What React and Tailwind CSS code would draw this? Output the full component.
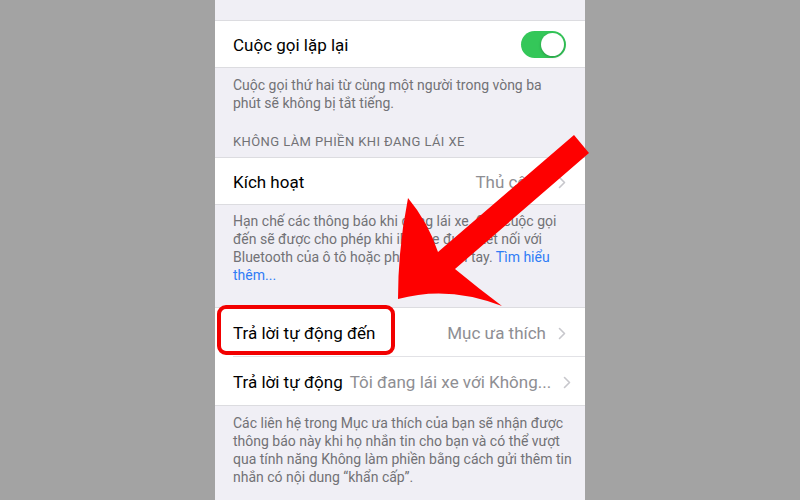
import React from 'react';

const font = { fontFamily: 'Roboto, "Noto Sans", sans-serif' };

const Chevron = () => (
  <svg width="8" height="13" viewBox="0 0 8 13" className="ml-[12px] shrink-0">
    <path d="M1.5 1.5 L6.5 6.5 L1.5 11.5" fill="none" stroke="#c7c7cc" strokeWidth="1.6" strokeLinecap="round" strokeLinejoin="round" />
  </svg>
);

const Toggle = () => (
  <div className="w-[45px] h-[27px] rounded-full bg-[#34c759] p-[2px] flex justify-end">
    <div className="w-[23px] h-[23px] rounded-full bg-white shadow-[0_1px_3px_rgba(0,0,0,0.25)]" />
  </div>
);

const Row = ({ label, value, toggle, className = '' }) => (
  <div className={`h-[48px] bg-white flex items-center pl-[18px] pr-[19px] pt-[3px] ${className}`}>
    <span className="text-[17px] text-black whitespace-nowrap">{label}</span>
    <div className="flex-1 min-w-[7px]" />
    {toggle ? (
      <div className="-mt-[3px]">
        <Toggle />
      </div>
    ) : (
      <>
        <span className="text-[17px] text-[#8e8e93] whitespace-nowrap">{value}</span>
        <Chevron />
      </>
    )}
  </div>
);

const Footer = ({ lines, className = '' }) => (
  <div className={`pl-[18px] text-[14px] leading-[18px] text-[#727276] ${className}`}>
    {lines.map((l, i) => (
      <div key={i} className="whitespace-nowrap">{l}</div>
    ))}
  </div>
);

const Arrow = () => (
  <svg className="absolute inset-0 pointer-events-none" width="800" height="500" viewBox="0 0 800 500">
    <path
      d="M574 135 L589 153 L455 269 Q478 288 502 306 Q448 285 398 299 Q398 248 408 198 Q428 222 438 252 Z"
      fill="#fe0000"
    />
  </svg>
);

export default function App() {
  return (
    <div className="relative w-[800px] h-[500px] overflow-hidden flex bg-[#a3a3a3]" style={font}>
      <div className="flex-1" />
      <div className="w-[370px] h-full bg-[#f0eff5] flex flex-col">
        <div className="h-[20px]" />
        <Row label="Cuộc gọi lặp lại" toggle className="border-t border-b border-[#dcdce0]" />
        <Footer
          className="pt-[8px]"
          lines={['Cuộc gọi thứ hai từ cùng một người trong vòng ba', 'phút sẽ không bị tắt tiếng.']}
        />
        <div className="mt-[22px] mb-[7px] pl-[18px] h-[16px] leading-[16px] text-[13px] text-[#727276] uppercase tracking-[0.4px]">
          Không làm phiền khi đang lái xe
        </div>
        <Row label="Kích hoạt" value="Thủ công" className="border-t border-b border-[#dcdce0]" />
        <Footer
          className="pt-[7px]"
          lines={[
            'Hạn chế các thông báo khi đang lái xe. Các cuộc gọi',
            'đến sẽ được cho phép khi iPhone được kết nối với',
            <>Bluetooth của ô tô hoặc phụ kiện rảnh tay. <span className="text-[#2f7cf6]">Tìm hiểu</span></>,
            <span className="text-[#2f7cf6]">thêm...</span>,
          ]}
        />
        <div className="h-[23px]" />
        <div className="bg-white border-t border-b border-[#dcdce0]">
          <Row label="Trả lời tự động đến" value="Mục ưa thích" />
          <div className="ml-[18px] h-px bg-[#e2e2e6]" />
          <Row label="Trả lời tự động" value="Tôi đang lái xe với Không..." className="h-[47px]" />
        </div>
        <Footer
          className="pt-[8px]"
          lines={[
            'Các liên hệ trong Mục ưa thích của bạn sẽ nhận được',
            'thông báo này khi họ nhắn tin cho bạn và có thể vượt',
            'qua tính năng Không làm phiền bằng cách gửi thêm tin',
            'nhắn có nội dung “khẩn cấp”.',
          ]}
        />
      </div>
      <div className="flex-1" />

      {/* highlight box around the row label */}
      <div className="absolute left-[217px] top-[305px] w-[178px] h-[50px] border-[4px] border-[#f20000] rounded-[9px]" />
      <Arrow />
    </div>
  );
}
